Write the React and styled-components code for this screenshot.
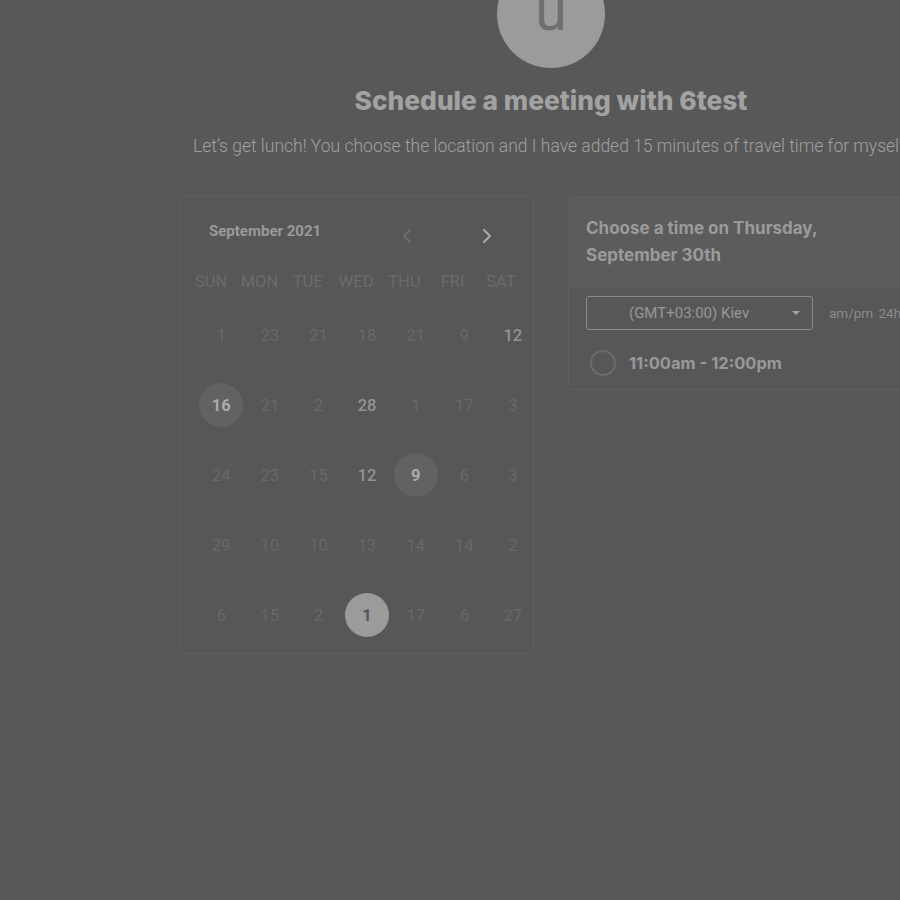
import React from 'react';
import styled, { createGlobalStyle } from 'styled-components';

const GlobalStyle = createGlobalStyle`
  html, body {
    margin: 0;
    padding: 0;
    background: #585858;
    overflow: hidden;
  }
  body {
    font-family: Roboto, "Liberation Sans", sans-serif;
  }
`;

const Page = styled.div`
  width: 1102px;
  height: 900px;
  display: flex;
  flex-direction: column;
  align-items: center;
  background: #585858;
`;

const Avatar = styled.div`
  width: 108px;
  height: 108px;
  margin-top: -40px;
  border-radius: 50%;
  background: #9b9b9b;
  color: #707070;
  font-size: 58px;
  line-height: 100px;
  text-align: center;
  font-family: Roboto, sans-serif;
`;

const Title = styled.h1`
  margin: 18px 0 0;
  font-size: 26.3px;
  line-height: 30px;
  font-weight: 800;
  color: #a2a2a2;
  font-family: Inter, sans-serif;
  white-space: nowrap;
`;

const Subtitle = styled.p`
  margin: 18px 0 0;
  font-size: 17.5px;
  line-height: 24px;
  font-weight: 300;
  color: #a0a0a0;
  white-space: nowrap;
`;

const Columns = styled.div`
  margin-top: 38px;
  display: flex;
  gap: 34px;
  align-items: flex-start;
`;

const Panel = styled.div`
  width: 354px;
  background: #575757;
  border: 1px solid #5f5f5f;
  border-radius: 3px;
  box-sizing: border-box;
`;

const CalendarPanel = styled(Panel)`
  height: 458px;
  padding-top: 24px;
`;

const MonthRow = styled.div`
  display: flex;
  align-items: center;
  height: 22px;
  padding-left: 28px;
`;

const MonthLabel = styled.div`
  font-size: 15px;
  font-weight: 700;
  color: #9a9a9a;
  width: 191px;
  margin-top: -2px;
`;

const Arrow = styled.button`
  border: none;
  background: none;
  padding: 0;
  width: 14px;
  height: 16px;
  margin-top: 8px;
  margin-right: ${p => p.$gap || 0}px;
  color: ${p => (p.$active ? '#a9a9a9' : '#6c6c6c')};
  display: flex;
  align-items: center;
  justify-content: center;
`;

const WeekRow = styled.div`
  display: grid;
  grid-template-columns: repeat(7, 48.3px);
  margin: 29px 0 0 6px;
`;

const WeekDay = styled.div`
  text-align: center;
  font-size: 16.5px;
  line-height: 20px;
  color: #6b6b6b;
`;

const DayGrid = styled.div`
  display: grid;
  grid-template-columns: repeat(7, 48.6px);
  grid-auto-rows: 70px;
  margin: 8px 0 0 16px;
  width: 340px;
`;

const DayCell = styled.div`
  display: flex;
  align-items: center;
  justify-content: center;
`;

const Day = styled.div`
  width: 44px;
  height: 44px;
  border-radius: 50%;
  display: flex;
  align-items: center;
  justify-content: center;
  font-size: 16.5px;
  font-weight: ${p => (p.$selected || p.$ring ? 700 : p.$bold ? 500 : 400)};
  color: ${p =>
    p.$selected ? '#555555' : p.$ring ? '#ababab' : p.$bold ? '#939393' : '#686868'};
  background: ${p => (p.$selected ? '#9b9b9b' : p.$ring ? '#626262' : 'transparent')};
`;

const TimeHeader = styled.div`
  background: #5c5c5c;
  border-bottom: 1px solid #606060;
  padding: 18px 17px;
  height: 91px;
  box-sizing: border-box;
  font-family: Inter, sans-serif;
  font-size: 17px;
  line-height: 27px;
  font-weight: 700;
  color: #9b9b9b;
`;

const Controls = styled.div`
  display: flex;
  align-items: center;
  gap: 16px;
  padding: 8px 17px 0;
`;

const Select = styled.div`
  width: 227px;
  height: 34px;
  box-sizing: border-box;
  border: 1px solid #8a8a8a;
  border-radius: 3px;
  display: flex;
  align-items: center;
  padding: 0 12px 0 42px;
  font-size: 15px;
  color: #979797;
`;

const SelectText = styled.span`
  flex: 1;
`;

const Caret = styled.span`
  width: 0;
  height: 0;
  border-left: 4px solid transparent;
  border-right: 4px solid transparent;
  border-top: 4px solid #a5a5a5;
`;

const Format = styled.div`
  font-size: 13.5px;
  color: #8a8a8a;
  white-space: nowrap;
  word-spacing: 2px;
`;

const Slot = styled.div`
  display: flex;
  align-items: center;
  gap: 13px;
  padding: 20px 0 13px 21px;
`;

const Radio = styled.span`
  width: 26px;
  height: 26px;
  border-radius: 50%;
  border: 2px solid #6b6b6b;
  box-sizing: border-box;
`;

const SlotText = styled.span`
  font-family: Inter, sans-serif;
  font-size: 16.5px;
  font-weight: 700;
  color: #999999;
`;

const Chevron = ({ dir }) => (
  <svg width="10" height="16" viewBox="0 0 10 16" fill="none">
    <path
      d={dir === 'left' ? 'M8 2 L2 8 L8 14' : 'M2 2 L8 8 L2 14'}
      stroke="currentColor"
      strokeWidth="2"
      strokeLinecap="round"
      strokeLinejoin="round"
    />
  </svg>
);

const weekDays = ['SUN', 'MON', 'TUE', 'WED', 'THU', 'FRI', 'SAT'];

const days = [
  ['1'], ['23'], ['21'], ['18'], ['21'], ['9'], ['12', 'bold'],
  ['16', 'ring'], ['21'], ['2'], ['28', 'bold'], ['1'], ['17'], ['3'],
  ['24'], ['23'], ['15'], ['12', 'bold'], ['9', 'ring'], ['6'], ['3'],
  ['29'], ['10'], ['10'], ['13'], ['14'], ['14'], ['2'],
  ['6'], ['15'], ['2'], ['1', 'selected'], ['17'], ['6'], ['27'],
];

export default function App() {
  return (
    <Page>
      <GlobalStyle />
      <Avatar>u</Avatar>
      <Title>Schedule a meeting with 6test</Title>
      <Subtitle>
        Let’s get lunch! You choose the location and I have added 15 minutes of travel time for myself.
      </Subtitle>
      <Columns>
        <CalendarPanel>
          <MonthRow>
            <MonthLabel>September 2021</MonthLabel>
            <Arrow $gap={66}>
              <Chevron dir="left" />
            </Arrow>
            <Arrow $active>
              <Chevron dir="right" />
            </Arrow>
          </MonthRow>
          <WeekRow>
            {weekDays.map(d => (
              <WeekDay key={d}>{d}</WeekDay>
            ))}
          </WeekRow>
          <DayGrid>
            {days.map(([n, kind], i) => (
              <DayCell key={i}>
                <Day $bold={kind === 'bold'} $ring={kind === 'ring'} $selected={kind === 'selected'}>
                  {n}
                </Day>
              </DayCell>
            ))}
          </DayGrid>
        </CalendarPanel>
        <Panel>
          <TimeHeader>
            Choose a time on Thursday,
            <br />
            September 30th
          </TimeHeader>
          <Controls>
            <Select>
              <SelectText>(GMT+03:00) Kiev</SelectText>
              <Caret />
            </Select>
            <Format>am/pm 24h</Format>
          </Controls>
          <Slot>
            <Radio />
            <SlotText>11:00am - 12:00pm</SlotText>
          </Slot>
        </Panel>
      </Columns>
    </Page>
  );
}
